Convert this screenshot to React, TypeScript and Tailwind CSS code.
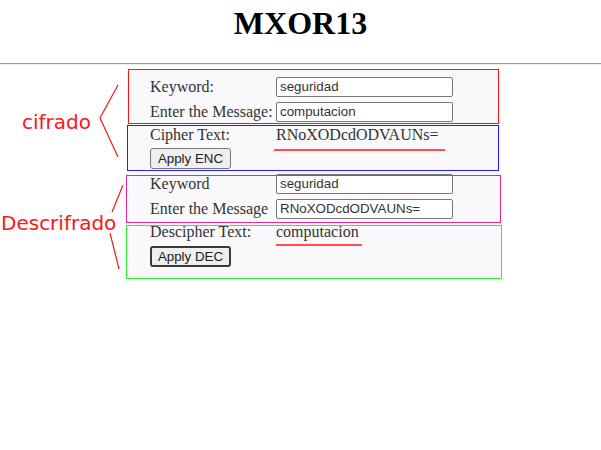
import React from "react"

function Row({ label, children, tall = true }: { label: string; children: React.ReactNode; tall?: boolean }) {
  return (
    <div className={`flex items-center ${tall ? "h-[25px]" : "h-[21px]"}`}>
      <span className="w-[126px] shrink-0 whitespace-nowrap">{label}</span>
      {children}
    </div>
  )
}

function Field({ value }: { value: string }) {
  return (
    <input
      readOnly
      value={value}
      className="w-[177px] h-[20px] px-[3px] border border-[#767676] rounded-[2px] bg-white text-[13.33px] text-[#333] font-['Liberation_Sans',Arial,sans-serif] outline-none"
    />
  )
}

function Btn({ label, focused = false }: { label: string; focused?: boolean }) {
  return (
    <button
      className={`h-[21px] w-[81px] rounded-[3px] bg-[#efefef] text-[13.33px] text-[#222] font-['Liberation_Sans',Arial,sans-serif] leading-none ${
        focused ? "border-2 border-[#3a3a3a]" : "border border-[#767676]"
      }`}
    >
      {label}
    </button>
  )
}

export default function App() {
  return (
    <div className="relative w-[601px] h-[450px] bg-white font-['Liberation_Serif','Times_New_Roman',serif] text-[16px] text-[#333] overflow-hidden">
      <h1 className="pt-[5px] text-center text-[32px] leading-[37px] font-bold text-black">MXOR13</h1>
      <hr className="mt-[21px] border-t border-t-[#9a9a9a] border-b border-b-[#eeeeee]" />

      <form className="mt-[4px] ml-[127px] w-[374px] pl-[23px] pt-[5px] pb-[11px] bg-[#f9f9fb]">
        <Row label="Keyword:">
          <Field value="seguridad" />
        </Row>
        <Row label="Enter the Message:">
          <Field value="computacion" />
        </Row>
        <Row label="Cipher Text:" tall={false}>
          <span>RNoXODcdODVAUNs=</span>
        </Row>
        <div className="flex mt-[3px]">
          <Btn label="Apply ENC" />
        </div>

        <div className="mt-[2px]">
          <Row label="Keyword">
            <Field value="seguridad" />
          </Row>
          <Row label="Enter the Message">
            <Field value="RNoXODcdODVAUNs=" />
          </Row>
          <Row label="Descipher Text:" tall={false}>
            <span>computacion</span>
          </Row>
        </div>
        <div className="flex mt-[4px]">
          <Btn label="Apply DEC" focused />
        </div>
      </form>

      {/* annotations drawn over the page */}
      <svg className="absolute inset-0 pointer-events-none" width="601" height="450" fill="none">
        <rect x="128.5" y="69.5" width="370" height="54" stroke="#ff1414" />
        <rect x="127.5" y="125.5" width="371" height="45" stroke="#1f1fff" />
        <rect x="126.5" y="175.5" width="374" height="47" stroke="#e8259b" />
        <rect x="126.5" y="225.5" width="375" height="53" stroke="#2cf52c" />
        <line x1="274" y1="150" x2="445" y2="150" stroke="#ff1414" strokeWidth="1.5" />
        <line x1="276" y1="245" x2="362" y2="245" stroke="#ff1414" strokeWidth="1.5" />
        <polyline points="118,85 100,118 118,157" stroke="#ff1414" strokeWidth="1.2" />
        <line x1="123" y1="185" x2="112" y2="212" stroke="#ff1414" strokeWidth="1.2" />
        <line x1="110" y1="233" x2="119" y2="269" stroke="#ff1414" strokeWidth="1.2" />
      </svg>
      <span className="absolute left-[22px] top-[110px] text-[20px] leading-[24px] text-[#ff1414] font-['DejaVu_Sans',sans-serif]">
        cifrado
      </span>
      <span className="absolute left-[1px] top-[211px] text-[20px] leading-[24px] text-[#ff1414] font-['DejaVu_Sans',sans-serif]">
        Descrifrado
      </span>
    </div>
  )
}
